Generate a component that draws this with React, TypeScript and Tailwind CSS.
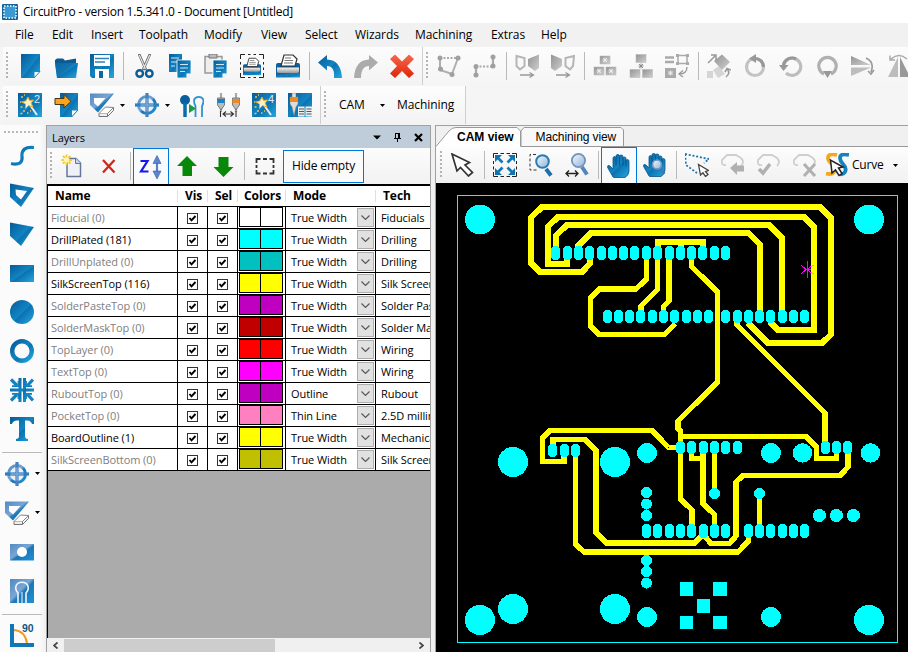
import React from "react";

type Kids = { children?: React.ReactNode };

const B = "url(#blue)";
const S = "url(#steel)";
const G = "url(#gray)";

function Defs() {
  return (
    <svg className="absolute h-0 w-0" aria-hidden="true">
      <defs>
        <linearGradient id="blue" x1="0" y1="0" x2="1" y2="1">
          <stop offset="0" stopColor="#075a96" />
          <stop offset="0.5" stopColor="#1284c2" />
          <stop offset="0.55" stopColor="#0c72b1" />
          <stop offset="1" stopColor="#22a9e0" />
        </linearGradient>
        <linearGradient id="steel" x1="0" y1="0" x2="1" y2="1">
          <stop offset="0" stopColor="#4f8ac2" />
          <stop offset="0.45" stopColor="#7ba6d4" />
          <stop offset="0.55" stopColor="#1b77b8" />
          <stop offset="1" stopColor="#1d93d2" />
        </linearGradient>
        <linearGradient id="gray" x1="0" y1="0" x2="1" y2="1">
          <stop offset="0" stopColor="#939393" />
          <stop offset="1" stopColor="#cfcfcf" />
        </linearGradient>
        <linearGradient id="silver" x1="0" y1="0" x2="0" y2="1">
          <stop offset="0" stopColor="#f6f6f6" />
          <stop offset="1" stopColor="#8c8c8c" />
        </linearGradient>
        <linearGradient id="lens" x1="0" y1="0" x2="1" y2="1">
          <stop offset="0" stopColor="#f2f8fd" />
          <stop offset="1" stopColor="#8fb4dd" />
        </linearGradient>
        <linearGradient id="red" x1="0" y1="0" x2="0" y2="1">
          <stop offset="0" stopColor="#f4694d" />
          <stop offset="1" stopColor="#e02408" />
        </linearGradient>
      </defs>
    </svg>
  );
}

/* A 36px toolbar slot that holds one 24px icon. */
function Slot({ children, on }: Kids & { on?: boolean }) {
  return (
    <div className={on ? "flex h-full w-9 shrink-0 items-center justify-center border border-b-0 border-[#0078d7] bg-[#f9fafc]" : "flex h-full w-9 shrink-0 items-center justify-center"}>
      <svg viewBox="0 0 24 24" className="h-6 w-6 shrink-0" fill="none">{children}</svg>
    </div>
  );
}

function VSlot({ children, drop }: Kids & { drop?: boolean }) {
  return (
    <div className={drop ? "flex h-[39px] shrink-0 items-center gap-1.5 pl-[5px]" : "flex h-[39px] shrink-0 items-center pl-2.5"}>
      <svg viewBox="0 0 24 24" className="h-6 w-6 shrink-0" fill="none">{children}</svg>
      {drop && <Caret />}
    </div>
  );
}

function Sep() {
  return (
    <div className="flex h-full w-1.5 shrink-0 items-center justify-center">
      <div className="h-7 w-px bg-[#b9b9b9]" />
    </div>
  );
}

function Grip() {
  return (
    <svg className="h-7 w-0.5 shrink-0" viewBox="0 0 2 28" shapeRendering="crispEdges">
      <path d="M1 0V28" stroke="#b4b4b4" strokeWidth="2" strokeDasharray="2 2" />
    </svg>
  );
}

function Caret() {
  return (
    <svg className="h-[3px] w-[5px] shrink-0" viewBox="0 0 5 3">
      <path d="M0 0H5L2.5 3Z" fill="#000" />
    </svg>
  );
}

/* ---------- shared icon drawings ---------- */

const Wand = ({ n }: { n: string }) => (
  <>
    <rect width="24" height="24" fill={B} />
    <path d="M12 12L19 22" stroke="#e9eef2" strokeWidth="2" />
    <path d="M10 4L11.500 7.500L15.500 7L13 10L15 14L10.500 12.500L7.500 15.500L7.500 11L4 9L8 7.800Z" fill="#fff3c4" stroke="#f4a81c" strokeWidth="1" />
    <path d="M3 4h2M2 9h1.500M2.500 14h2M5 18h2M9 20h1.500M2.500 20.500h2M6 2h1M12 18h1" stroke="#f6c04a" strokeWidth="1.500" />
    <text x="16" y="9.500" fontSize="11" fontFamily="Liberation Sans" fill="#dbe8f3">{n}</text>
  </>
);

const Eraser = () => (
  <>
    <path d="M0 0.500H24L8 19.500L0 12Z" fill={S} />
    <path d="M4 5H15.500L8 13.500L4 10Z" fill="#fff" />
    <path d="M9 20.500L15.500 14L23.500 14.500L17.500 20.500Z" fill="#fff" stroke="#777" strokeWidth="0.900" />
    <path d="M9 20.500V23.500H17.500V20.500M17.500 23.500L23.500 17.500V14.500" fill="#eee" stroke="#666" strokeWidth="0.900" />
  </>
);

const Target = () => (
  <>
    <circle cx="12" cy="12" r="8.500" stroke={S} strokeWidth="3" fill="#e8f0f8" />
    <path d="M12 0V24" stroke="#4682bd" strokeWidth="3.200" />
    <path d="M0 12.010H24" stroke="#2f7fc0" strokeWidth="3.200" />
    <path d="M12 5.500V18.500M5.500 12.010H18.500" stroke="#7fa9d6" strokeWidth="1.500" />
  </>
);

const Printer = () => (
  <>
    <path d="M0 11Q0 9 2 9H22Q24 9 24 11V23H0Z" fill="#0e5f9b" />
    <path d="M5 12L8 1H17L21 5L19 12Z" fill="#fff" stroke="#333" strokeWidth="1.200" />
    <path d="M9 4H15M8.500 6.500H17M8 9H17" stroke="#777" />
    <path d="M1 13.500H23V18.500Q12 21 1 18.500Z" fill="url(#silver)" />
    <path d="M0 19H24V23.500H0Z" fill={B} />
  </>
);

const Hand = () => (
  <path
    d="M6 23L2 16Q-0.500 12.500 1 11.500Q3 11 5 14L6 15V4.500Q6 2.500 7.500 2.500Q9 2.500 9 4.500V2Q9 0.500 10.700 0.500Q12.500 0.500 12.500 2V2.500Q12.500 1 14.200 1Q16 1 16 2.500V4.500Q16 3 17.600 3Q19 3 19 4.500V7Q19 5.500 20.500 5.500Q22 5.500 22 7.500V17Q22 21 18 23.500H7Z"
    fill={B}
    stroke="#0a568c"
    strokeWidth="0.800"
  />
);

const HandLines = () => <path d="M9 5V11.500M12.500 3V11.500M16 4V11.500M19 7V12.500" stroke="#064a7c" strokeWidth="0.800" />;

const Pointer = () => <path d="M1 1L6 18L9.500 14.500L17.500 23L21.500 19.500L14 12L18.500 9.500Z" fill="#fff" stroke="#333" strokeWidth="1.700" />;

const MiniPointer = () => <path d="M13.500 11.500L15.500 22L18 19.800L20.500 23.500L23 21.500L20.500 18.500L23.500 17.500Z" fill="#fff" stroke="#444" strokeWidth="1.300" />;

const Blk = ({ x, y }: { x: number; y: number }) => (
  <rect x={x} y={y} width="10" height="8" fill={G} stroke="#b5b5b5" strokeWidth="0.500" />
);

const Star = ({ x, y, c }: { x: number; y: number; c: string }) => (
  <path transform={`translate(${x} ${y})`} d="M-2.500 0H2.500M0 -2.500V2.500M-2 -2L2 2M-2 2L2 -2" stroke={c} strokeWidth="0.900" />
);

const Lasso = () => (
  <path d="M5 12Q0 13 1 7L6 2H15L20 5Q24 9 20 13" stroke="#cfcfcf" strokeWidth="1.800" />
);

/* ---------- main toolbars ---------- */

function RowOne() {
  return (
    <div className="flex h-[38px] w-full shrink-0 overflow-hidden pl-[3px]">
      <div className="flex h-full w-[420px] shrink-0 items-center border-r border-[#cfcfcf] bg-linear-to-b from-[#fcfcfc] to-[#f3f3f3] pl-[3px]">
        <Grip />
        <div className="w-1 shrink-0" />
        <Slot><path d="M3 0H22V17L16 24H3Z" fill={B} /><path d="M16 24V17.500H22Z" fill="#fff" stroke="#1389c5" /></Slot>
        <Slot><path d="M1 6L3 4.500H9L11 6.500L22 4.500V9H1Z" fill="#0b5b93" /><path d="M1 9H24L22 24H3Z" fill={B} /><path d="M1 9H20L3 24Z" fill="#136ea8" opacity="0.600" /></Slot>
        <Slot><path d="M0 0H24V24H2L0 22Z" fill={B} /><path d="M4 1H20V12H4Z" fill="#fff" /><path d="M5 4.500H19M5 8H15" stroke="#3183b5" strokeWidth="1.500" /><path d="M5 15H19V24H5Z" fill="#fff" /><path d="M9 17H13V24H9Z" fill="#0c69a5" /></Slot>
        <Sep />
        <Slot><path d="M7 0L14 16M18 0L11 16" stroke="#666" strokeWidth="2.600" /><path d="M7.300 1L13.500 15M17.700 1L11.500 15" stroke="#e4e4e4" strokeWidth="1.200" /><circle cx="7.700" cy="19.500" r="3.300" stroke="#0b5c97" strokeWidth="2.400" /><circle cx="17.300" cy="19.500" r="3.300" stroke="#0b5c97" strokeWidth="2.400" /></Slot>
        <Slot><path d="M1 0H14V18H1Z" fill={B} /><path d="M3 4H11M3 8H9M3 12H7" stroke="#cde6f5" strokeWidth="1.200" /><path d="M9 6H23V20L19 24H9Z" fill={B} stroke="#fff" strokeWidth="0.800" /><path d="M12 10.500H20M12 14H20M12 17.500H17" stroke="#cde6f5" strokeWidth="1.200" /><path d="M18.500 24V19.500H23Z" fill="#fff" /></Slot>
        <Slot><path d="M1 2.500H18V19H1Z" fill="#eee" stroke="#999" strokeWidth="1.500" /><path d="M5 0H13V4H5Z" fill="#bbb" stroke="#777" /><path d="M9 6H23V20L19 24H9Z" fill={B} stroke="#fff" strokeWidth="0.800" /><path d="M12 10.500H20M12 14H20M12 17.500H17" stroke="#cde6f5" strokeWidth="1.200" /><path d="M18.500 24V19.500H23Z" fill="#fff" /></Slot>
        <Slot><path d="M0.500 5V0.500H5M19 0.500H23.500V5M23.500 19V23.500H19M5 23.500H0.500V19M8 0.500H10.500M13.500 0.500H16M8 23.500H10.500M13.500 23.500H16M0.500 8V10.500M0.500 13.500V16M23.500 8V10.500M23.500 13.500V16" stroke="#222" /><g transform="translate(3 3.500) scale(0.75)"><Printer /></g></Slot>
        <Slot><Printer /></Slot>
        <Sep />
        <Slot><path d="M0 8.500L9 1V5.500Q23 6 24 24H16Q17 12 9 12V16.500Z" fill={B} /></Slot>
        <Slot><path d="M24 8.500L15 1V5.500Q1 6 0 24H7Q7 12 15 12V16.500Z" fill="#ababab" /></Slot>
        <Slot><path d="M0 5L5 0.500L12 7.500L19 0.500L24 5L17 12L24 19.500L19 24L12 17L5 24L0 19.500L7 12Z" fill="url(#red)" /></Slot>
      </div>
      <div className="flex h-full w-[520px] shrink-0 items-center bg-linear-to-b from-[#fcfcfc] to-[#f5f5f5] pl-[3px]">
        <Grip />
        <div className="w-[3px] shrink-0" />
        <Slot><path d="M3 4H20" stroke="#aaa" strokeWidth="2" strokeDasharray="2 1.500" /><path d="M3 4V16L15 20L21 4" stroke="#b0b0b0" strokeWidth="2" /><g fill="#a0a0a0"><circle cx="3" cy="4" r="2.500" /><circle cx="21" cy="4" r="2.500" /><circle cx="3.500" cy="15" r="2.500" /><circle cx="15" cy="20.500" r="2.500" /></g></Slot>
        <Slot><path d="M3 21V12.500M20 12V3" stroke="#aaa" strokeWidth="2.200" /><path d="M3 12.500H20" stroke="#aaa" strokeWidth="2" strokeDasharray="2 1.500" /><g fill="#a0a0a0"><circle cx="3" cy="21" r="2.500" /><circle cx="3" cy="12.500" r="2.500" /><circle cx="20" cy="12" r="2.500" /><circle cx="20" cy="3" r="2.500" /></g></Slot>
        <Sep />
        <Slot><path d="M1.500 2L9.500 4V12L5 15.500L1.500 12Z" stroke="#b5b5b5" strokeWidth="2" /><path d="M24 0.500L13 5V12L20 17L24 14Z" fill={G} /><path d="M5 21H18M14.500 18.500L18.500 21L14.500 23.500" stroke="#999" strokeWidth="1.300" /></Slot>
        <Slot><path d="M0 0.500L11 5V12L4 17L0 14Z" fill={G} /><path d="M23 2L14.500 4V12L19 15.500L22 12Z" stroke="#b5b5b5" strokeWidth="2" /><path d="M5 21H18M14.500 18.500L18.500 21L14.500 23.500" stroke="#999" strokeWidth="1.300" /></Slot>
        <Sep />
        <Slot><Blk x={7} y={2} /><Blk x={1} y={13} /><Blk x={13} y={13} /><Star x={12} y={6} c="#eee" /><Star x={6} y={17} c="#eee" /><Star x={18} y={17} c="#eee" /></Slot>
        <Slot><Blk x={7} y={0.5} /><Blk x={1} y={15.5} /><Blk x={13.5} y={15.5} /><Star x={12} y={12} c="#888" /></Slot>
        <Slot><path d="M0 3.500H9M0 8H9" stroke="#aaa" strokeWidth="2.600" /><rect x="13" y="1.500" width="9" height="8" stroke="#aaa" strokeWidth="1.500" /><g fill="#aaa"><path d="M11 0h3v3h-3zM21 0h3v3h-3zM11 8h3v3h-3zM21 8h3v3h-3z" /></g><path d="M0 14H11V24H0Z" fill="#aaa" /><Star x={5.5} y={19} c="#eee" /><path d="M22 13Q22 20 14 20M18 16.500L14 20L18 23" stroke="#999" strokeWidth="1.300" /></Slot>
        <Sep />
        <Slot><path d="M0 17H6V24H0Z M6 16L12 12L18 20L11 24Z" fill="#d5d5d5" /><path d="M7 7L15 0.500L23 8L15 16Z" fill={G} /><path d="M1 9L8 2M4 1H9V6" stroke="#999" strokeWidth="1.500" /><path d="M19 23Q24 19 20 15M18 18L20 14.500L24 16" stroke="#999" strokeWidth="1.600" /></Slot>
        <Slot><circle cx="12" cy="13" r="8.500" stroke="#c3c3c3" strokeWidth="3.200" /><path d="M12 4.500A8.500 8.500 0 0 1 20.500 13" stroke="#999" strokeWidth="3.200" /><path d="M13 0L6 4.500L13 9Z" fill="#999" /></Slot>
        <Slot><path d="M7 19A8.700 8.700 0 1 0 4.500 11" stroke="#bdbdbd" strokeWidth="3.200" /><path d="M4.500 11A8.700 8.700 0 0 1 17 5" stroke="#999" strokeWidth="3.200" /><path d="M0 11H9.500L4.500 17Z" fill="#999" /></Slot>
        <Slot><path d="M9 20A8.700 8.700 0 1 1 16 20" stroke="#b0b0b0" strokeWidth="3.200" /><path d="M8 17H17L12.500 24Z" fill="#999" /></Slot>
        <Slot><path d="M0 2L20 11H0Z" fill={G} /><path d="M0 22L20 13.500H0Z" fill="#bdbdbd" /><path d="M15 4Q24 8 20 18M17 17L20 20L23 16" stroke="#999" strokeWidth="1.600" /></Slot>
        <Slot><path d="M11 3V23H1Z" fill="#bdbdbd" /><path d="M13 3V23H23Z" fill="#999" /><path d="M4 5Q12 -2 20 5M3 1.500V6H8" stroke="#aaa" strokeWidth="1.500" /></Slot>
      </div>
    </div>
  );
}

function RowTwo() {
  return (
    <div className="flex h-[38px] w-full shrink-0 pl-[3px]">
      <div className="flex h-full w-[318px] shrink-0 items-center border-r border-[#cfcfcf] bg-linear-to-b from-[#fdfdfd] to-[#f3f3f3] pl-[3px]">
        <Grip />
        <div className="w-1 shrink-0" />
        <Slot><Wand n="2" /></Slot>
        <Slot><path d="M6 0H24V17L18 24H6Z" fill={B} /><path d="M17.500 24V17H24Z" fill="#fff" stroke="#1389c5" /><path d="M1 5.500H10V1.500L17 8.500L10 15V11.500H1Z" fill="#f9a51c" stroke="#4a3512" /></Slot>
        <Slot><Eraser /></Slot>
        <div className="w-[9px] shrink-0"><Caret /></div>
        <Slot><Target /></Slot>
        <div className="w-[9px] shrink-0"><Caret /></div>
        <Slot><circle cx="5" cy="7" r="5" fill="#0c5f9d" /><path d="M5 10V24" stroke="#0c6cab" strokeWidth="3.500" /><path d="M15.500 24V13Q14 11 14 7A5 4.500 0 0 1 23.500 7Q23.500 11 22 13V24" stroke="#3192d0" strokeWidth="1.800" /><path d="M9 11L16 15.500L9 20Z" fill="#1c9a3c" /></Slot>
        <Slot><path d="M5 0V19M20 0V19" stroke="#aaa" strokeWidth="2.200" /><path d="M1.500 5H8.500V12L5 17L1.500 12Z" fill="#bbb" stroke="#555" strokeWidth="0.700" /><path d="M1.500 6H8.500V10H1.500Z" fill="#1385c8" /><path d="M16.500 5H23.500V12L20 17L16.500 12Z" fill="#bbb" stroke="#555" strokeWidth="0.700" /><path d="M16.500 6H23.500V10H16.500Z" fill="#f08a1c" /><path d="M7 21H17M10 18.500L7 21L10 23.500M14.500 18.500L17.500 21L14.500 23.500M4.500 18V24M20 18V24" stroke="#333" strokeWidth="1.100" /></Slot>
        <Slot><Wand n="4" /></Slot>
        <Slot><rect width="24" height="24" fill={B} /><path d="M4 0H8V4H10V11L8 14L6 23L4 14L2 11V4H4Z" fill="#ddd" stroke="#777" strokeWidth="0.500" /><path d="M2 4H10V9H2Z" fill="#ee8a22" /><path d="M10 13.500H16.500V23.500H10ZM17.500 13.500H24V23.500H17.500Z" fill="#eee" /><path d="M11 16h5M11 18.500h5M11 21h5M18.500 16h5M18.500 18.500h5M18.500 21h5" stroke="#555" strokeWidth="1.200" /></Slot>
      </div>
      <div className="flex h-full w-[145px] shrink-0 items-center border-r border-[#cfcfcf] bg-linear-to-b from-[#fdfdfd] to-[#f3f3f3] pl-[3px]">
        <Grip />
        <span className="ml-[13px] w-[41px] shrink-0">CAM</span>
        <Caret />
        <span className="ml-3">Machining</span>
      </div>
    </div>
  );
}

function LeftBar() {
  return (
    <div className="flex h-[527px] w-[46px] shrink-0 flex-col overflow-hidden bg-linear-to-r from-[#fbfbfb] from-85% to-[#f0f0f0]">
      <div className="flex h-[11px] shrink-0 items-start pt-1.5 pl-1">
        <svg className="h-0.5 w-[35px]" viewBox="0 0 35 2" shapeRendering="crispEdges"><path d="M0 1H35" stroke="#b8b8b8" strokeWidth="2" strokeDasharray="2 2" /></svg>
      </div>
      <VSlot><path d="M1 19.500Q13 22 12 13Q11 2 24 3.500" stroke={B} strokeWidth="3.200" /></VSlot>
      <VSlot><path d="M0 0.500L24 5L11 24L0 14Z" fill={B} /><path d="M5.500 6.500L17 8L11 16.500L6 12Z" fill="#fff" /></VSlot>
      <VSlot><path d="M0 0.500L24 5L11 24L0 14Z" fill={B} /></VSlot>
      <VSlot><path d="M0 4H24V21H0Z" fill={B} /></VSlot>
      <VSlot><circle cx="12" cy="12" r="12" fill={B} /></VSlot>
      <VSlot><circle cx="12" cy="12" r="9.800" stroke={B} strokeWidth="4.400" /></VSlot>
      <VSlot><path d="M0 10.400H24V13.600H0ZM8.500 0H11.500V24H8.500ZM13 0H16V24H13Z" fill={B} /><path d="M1 1.500L7 7.500M23 1.500L17.500 7.500M1 22.500L7 16.500M23 22.500L17.500 16.500" stroke="#1282c0" strokeWidth="3.200" /><path d="M2 8.200H8.500V3M22 8.200H16V3M2 15.800H8.500V21M22 15.800H16V21" stroke="#1180be" strokeWidth="1.800" /></VSlot>
      <VSlot><path d="M0 0H24V7H22Q21 3.500 17 3.500H15V19Q15 22 18 22V24H6V22Q9 22 9 19V3.500H7Q3 3.500 2 7H0Z" fill={B} /></VSlot>
      <div className="mt-[4px] mb-px ml-0.5 h-px w-10 shrink-0 bg-[#b9b9b9]" />
      <VSlot drop><Target /></VSlot>
      <VSlot drop><Eraser /></VSlot>
      <VSlot><path d="M0 4H24V20.500H0Z" fill={S} /><circle cx="12" cy="12" r="5" fill="#fff" /></VSlot>
      <VSlot><rect width="24" height="24" fill={S} /><path d="M8 24V14Q5 11 6 7A6.500 6 0 0 1 18 7Q19 11 16 14V24" stroke="#f2f6fa" strokeWidth="1.600" /><path d="M12 24V13" stroke="#f2f6fa" strokeWidth="1" /></VSlot>
      <div className="mt-[4px] ml-0.5 h-px w-10 shrink-0 bg-[#b9b9b9]" />
      <VSlot><path d="M2 1V22H24" stroke="#0f78b6" strokeWidth="4" /><path d="M4 7Q15 8 17 20" stroke="#f29a1c" strokeWidth="2" /><text x="12" y="8.500" fontSize="10.500" fontWeight="700" fontFamily="Liberation Sans" fill="#14577f">90</text></VSlot>
    </div>
  );
}

/* ---------- layers panel ---------- */

type Layer = { name: string; live?: boolean; fill: string; mode: string; tech: string };

const layers: Layer[] = [
  { name: "Fiducial (0)", fill: "bg-white", mode: "True Width", tech: "Fiducials" },
  { name: "DrillPlated (181)", live: true, fill: "bg-[#00ffff]", mode: "True Width", tech: "Drilling" },
  { name: "DrillUnplated (0)", fill: "bg-[#00c0c0]", mode: "True Width", tech: "Drilling" },
  { name: "SilkScreenTop (116)", live: true, fill: "bg-[#ffff00]", mode: "True Width", tech: "Silk Screen" },
  { name: "SolderPasteTop (0)", fill: "bg-[#c000c0]", mode: "True Width", tech: "Solder Paste" },
  { name: "SolderMaskTop (0)", fill: "bg-[#c00000]", mode: "True Width", tech: "Solder Mask" },
  { name: "TopLayer (0)", fill: "bg-[#ff0000]", mode: "True Width", tech: "Wiring" },
  { name: "TextTop (0)", fill: "bg-[#ff00ff]", mode: "True Width", tech: "Wiring" },
  { name: "RuboutTop (0)", fill: "bg-[#c000c0]", mode: "Outline", tech: "Rubout" },
  { name: "PocketTop (0)", fill: "bg-[#ff80c0]", mode: "Thin Line", tech: "2.5D milling" },
  { name: "BoardOutline (1)", live: true, fill: "bg-[#ffff00]", mode: "True Width", tech: "Mechanical" },
  { name: "SilkScreenBottom (0)", fill: "bg-[#c0c000]", mode: "True Width", tech: "Silk Screen" },
];

function Check() {
  return (
    <svg className="mt-px h-[11px] w-[11px]" viewBox="0 0 11 11">
      <rect x="0.500" y="0.500" width="10" height="10" fill="#fff" stroke="#333" />
      <path d="M2.500 5L4.500 7.300L8.500 3" stroke="#000" strokeWidth="1.900" fill="none" />
    </svg>
  );
}

function LayerRow({ l }: { l: Layer }) {
  return (
    <div className="flex h-[22px] w-[383px] shrink-0 overflow-hidden border-b border-l border-black bg-white text-[11px]">
      <div className={l.live ? "flex w-[129px] shrink-0 items-center pl-[3px] whitespace-nowrap text-black" : "flex w-[129px] shrink-0 items-center pl-[3px] whitespace-nowrap text-[#808080]"}>{l.name}</div>
      <div className="flex w-[30px] shrink-0 items-center justify-center border-l border-black"><Check /></div>
      <div className="flex w-[30px] shrink-0 items-center justify-center border-l border-black"><Check /></div>
      <div className="flex w-12 shrink-0 border-l border-black pl-px">
        <div className="flex h-5 w-[44px] border border-black">
          <div className={`w-[21px] border-r border-black ${l.fill}`} />
          <div className={`flex-1 ${l.fill}`} />
        </div>
      </div>
      <div className="flex w-[90px] shrink-0 items-center border-l border-black pl-[5px] whitespace-nowrap">
        <span className="w-[66px] shrink-0">{l.mode}</span>
        <div className="flex h-[19px] w-[17px] shrink-0 items-center justify-center border border-[#adadad] bg-[#e1e1e1]">
          <svg className="h-[5px] w-[9px]" viewBox="0 0 9 5"><path d="M0.500 0.500L4.500 4.500L8.500 0.500" fill="none" stroke="#555" strokeWidth="1.100" /></svg>
        </div>
      </div>
      <div className="flex flex-1 items-center overflow-hidden border-l border-black pl-[5px] whitespace-nowrap">{l.tech}</div>
    </div>
  );
}

function LayersPanel() {
  return (
    <div className="flex h-[527px] w-[385px] shrink-0 flex-col overflow-hidden border-t border-r border-l border-[#a0a0a0]">
      <div className="flex h-[22px] shrink-0 items-center bg-[#bfcddb] pr-[7px] pl-[5px] text-[11px]">
        <span className="flex-1">Layers</span>
        <svg className="h-[5px] w-2" viewBox="0 0 8 5"><path d="M0 0.500H8L4 4.500Z" fill="#000" /></svg>
        <svg className="ml-3 h-[11px] w-[9px]" viewBox="0 0 9 11" shapeRendering="crispEdges"><path d="M2.500 6V1.500H6.500V6M5.500 1V6M1 6.500H8M4.500 7V10" stroke="#000" fill="none" /></svg>
        <svg className="ml-3 h-[9px] w-[9px]" viewBox="0 0 9 9"><path d="M1 1L8 8M8 1L1 8" stroke="#000" strokeWidth="2.200" /></svg>
      </div>
      <div className="flex h-9 shrink-0 items-center bg-linear-to-b from-[#fcfcfc] to-[#f2f2f2] pl-[3px]">
        <Grip />
        <div className="w-[3px] shrink-0" />
        <Slot><path d="M6 4.500H15L19.500 9V22.500H6Z" fill="#eef2f8" stroke="#66779a" strokeWidth="1.500" /><path d="M14.500 4V9.500H20" fill="#c7d3e4" stroke="#66779a" /><path d="M5.500 0.500V11.500M0.500 6H11M2 2L9.500 9.500M9.500 2L2 9.500" stroke="#f2c63c" strokeWidth="1.800" /><circle cx="5.500" cy="6" r="2.800" fill="#fff6a8" /></Slot>
        <Slot><path d="M6 6L17.500 18.500M17.500 6L6 18.500" stroke="#d02718" strokeWidth="2.300" /></Slot>
        <Sep />
        <Slot on><path d="M1.500 6H8.500L2 16.500H9.500" stroke="#1616f0" strokeWidth="2.200" /><path d="M18 4V20" stroke="#5c80c8" strokeWidth="2.200" /><path d="M14 8.500L18 0.500L22 8.500ZM14 16L18 24L22 16Z" fill="#5a86d0" stroke="#3a5da6" strokeWidth="0.600" /></Slot>
        <Slot><path d="M12 2L22 12H17V22H7.500V12H2Z" fill="#088808" /></Slot>
        <Slot><path d="M12.500 23L22.500 13H17.500V3H7.500V13H2.500Z" fill="#088808" /></Slot>
        <Sep />
        <Slot><path d="M3.500 9V5H7.500M10 5H14M16.500 5H20.500V9M20.500 11V14M20.500 16V19.500H16.500M14 19.500H10M7.500 19.500H3.500V16M3.500 14V11" stroke="#333" strokeWidth="1.800" /></Slot>
        <div className="flex h-[33px] w-[81px] items-center justify-center border border-[#0078d7] bg-[#fafafa] text-[12px] tracking-[-0.15px]">Hide empty</div>
      </div>
      <div className="flex h-[23px] w-[383px] shrink-0 items-center border-t-2 border-b border-l border-black bg-white font-bold">
        <span className="w-[129px] pl-[7px]">Name</span>
        <span className="w-[30px] border-l border-[#e0e0e0] pl-[7px]">Vis</span>
        <span className="w-[30px] border-l border-[#e0e0e0] pl-[7px]">Sel</span>
        <span className="w-12 border-l border-[#e0e0e0] pl-[6px]">Colors</span>
        <span className="w-[90px] border-l border-[#e0e0e0] pl-[7px]">Mode</span>
        <span className="flex-1 border-l border-[#e0e0e0] pl-[7px]">Tech</span>
      </div>
      {layers.map((l) => <LayerRow key={l.name} l={l} />)}
      <div className="flex-1 border-l border-black bg-[#ababab]" />
      <div className="flex h-[14px] shrink-0 items-center bg-[#f0f0f0]">
        <svg className="ml-1.5 h-[7px] w-[5px]" viewBox="0 0 5 7"><path d="M4.500 0.500L1 3.500L4.500 6.500" fill="none" stroke="#444" strokeWidth="1.700" /></svg>
        <div className="ml-1.5 h-full w-[211px] border-t border-[#f0f0f0] bg-[#cdcdcd]" />
        <div className="flex-1" />
        <svg className="mr-1.5 h-[7px] w-[5px]" viewBox="0 0 5 7"><path d="M0.500 0.500L4 3.500L0.500 6.500" fill="none" stroke="#444" strokeWidth="1.700" /></svg>
      </div>
    </div>
  );
}

/* ---------- board canvas ---------- */

const traces = [
  "590,256 590,263.5 582,272 540,272 531,263 531,217.5 542,207 820,207 830.5,217.5 830.5,335 822,343 768,343 748,323",
  "567,256 567,264 548,264 548,226.5 558,217 804,217 813.5,226.5 813.5,330 778,330 770,322",
  "556,253 556,235.5 567,225 769,225 782,238 782,316",
  "578,250 578,246 591,233 748.5,233 759.5,244 759.5,316",
  "657.5,253 657.5,242 703,242 703,250",
  "680.5,242 680.5,250",
];

const thinTraces = [
  "646.5,255 646.5,279 636,289 599.5,289 590.5,298 590.5,326 599,334.5 664.5,334.5 675,324",
  "657.5,253 657.5,289.5 641,306 641,316",
  "669,255 669,301 663.5,306.5 663.5,316",
  "691.5,255 691.5,266.5 717.5,292 717.5,382 678,421 678,429 680.5,431 680.5,499 692,510 692,531",
  "680.5,436.5 806,436.5 816.5,447 816.5,458.5 836.5,458.5 836.5,447",
  "737,320 737,325 825,413 825,447",
  "680,447.5 668.5,447.5 652,430.5 550,430.5 542.5,438 542.5,461.5 564,461.5 564,450",
  "553,450 553,439.5 585,439.5 596,450.5 596,532.5 606.5,543 695,543 703,534 711,543.5 729.5,543.5 736,536 736,482 743,475.5 840,475.5 848,467 848,447",
  "575.5,450 575.5,544 584,552 738,552 748.5,541 748.5,531",
  "691.5,447 691.5,458.5 703,458.5",
  "703,447 703,503.5 714.5,514.5 714.5,531",
  "714.5,447 714.5,493",
  "759.5,493 759.5,531",
];

const padRows = [
  { y: 246, h: 14, xs: [555.5, 567.5, 578.5, 589.5, 601.5, 612.5, 623.5, 634.5, 646.5, 657.5, 669.5, 680.5, 691.5, 702.5, 714.5, 725.5] },
  { y: 310, h: 13, xs: [607.5, 618.5, 629.5, 640.5, 652.5, 663.5, 674.5, 686.5, 697.5, 708.5, 725.5, 737.5, 748.5, 759.5, 770.5, 782.5, 793.5, 804.5] },
  { y: 444, h: 13, xs: [552.5, 564.5, 575.5] },
  { y: 441, h: 13, xs: [680.5, 691.5, 703.5, 714.5, 725.5, 737.5, 825.5, 836.5, 847.5] },
  { y: 524, h: 14, xs: [646.5, 657.5, 669.5, 680.5, 691.5, 703.5, 714.5, 725.5, 748.5, 759.5, 770.5, 782.5, 793.5, 804.5] },
];

const holes: [number, number, number][] = [
  [480, 219.5, 15], [869, 219.5, 15], [513, 462, 15], [615, 462, 15],
  [480, 620, 15], [513, 609, 15], [615, 609, 15], [869, 620, 15],
  [647, 453, 10], [771, 453, 10], [802.5, 453, 9.7], [870.5, 453, 9.7], [647, 617, 10], [771, 617, 10],
  [646.5, 492.5, 5.5], [646.5, 504, 5.5], [646.5, 515.5, 5.5],
  [646.5, 560.5, 5.5], [646.5, 571.5, 5.5], [646.5, 583, 5.5],
  [714.5, 493.5, 5.5], [759.5, 493.5, 5.5],
  [819.5, 515.5, 6.5], [836.5, 515.5, 6.5], [853.5, 515.5, 6.5],
];

/* Drill pad: a slot 9px wide with stepped corners. */
function Pad({ x, y, h }: { x: number; y: number; h: number }) {
  return <path d={`M${x - 2.5} ${y}h5v1h1v1h1v${h - 4}h-1v1h-1v1h-5v-1h-1v-1h-1v-${h - 4}h1v-1h1z`} />;
}

function Board() {
  return (
    <svg className="block h-[469px] w-[472px] shrink-0 bg-black" viewBox="436 183 472 469" shapeRendering="crispEdges">
      <rect x="457.500" y="195.500" width="440" height="447" fill="none" stroke="#00ffff" />
      <g fill="none" stroke="#ffff00" strokeLinejoin="miter">
        {traces.map((p) => <polyline key={p} points={p} strokeWidth="6" />)}
        {thinTraces.map((p) => <polyline key={p} points={p} strokeWidth="5.400" />)}
      </g>
      <g fill="#00ffff">
        {padRows.map((r) => r.xs.map((x) => <Pad key={`${r.y}-${x}`} x={x} y={r.y} h={r.h} />))}
        {holes.map(([x, y, r]) => <circle key={`${x}-${y}`} cx={x} cy={y} r={r} />)}
        <path d="M680 582h13v14h-13zM713 582h14v14h-14zM697 599h13v14h-13zM680 616h13v13h-13zM713 616h14v13h-14z" />
      </g>
      <path d="M807.500 261V278M805 269.500H811M801 265.500L811 272.500M801 273.500L811 266.500" stroke="#ff00ff" fill="none" />
      <path d="M811 266.500L814 265M811 272.500L814 274" stroke="#00ffff" fill="none" />
    </svg>
  );
}

function CamPanel() {
  return (
    <div className="flex h-[527px] w-[473px] shrink-0 flex-col overflow-hidden border-t border-l border-[#a0a0a0]">
      <div className="relative flex h-5 shrink-0 bg-[#f0f0f0] font-[family-name:'Liberation_Sans',sans-serif] tracking-normal">
        <svg className="absolute top-0 left-0 h-[21px] w-[472px]" viewBox="436 126 472 21">
          <path d="M521 146.500V131L524 127.500H621L623.500 130V146.500" fill="#f8f8f8" stroke="#999" />
          <path d="M436 146.500L449 131Q452 127.500 456 127.500H517L520.500 131V146.500" fill="#fff" stroke="#999" />
          <path d="M521 146.500H908" stroke="#999" />
        </svg>
        <span className="relative mt-[3px] ml-[21px] w-[78.500px] text-[12px] leading-4 font-bold whitespace-nowrap">CAM view</span>
        <span className="relative mt-[3px] text-[12px] leading-4 tracking-[-0.1px] whitespace-nowrap">Machining view</span>
      </div>
      <div className="flex h-[37px] shrink-0 items-center overflow-hidden bg-linear-to-b from-[#fdfdfd] to-[#f1f1f1] pt-px pl-[4px]">
        <Grip />
        <div className="w-[3px] shrink-0" />
        <Slot><Pointer /></Slot>
        <Sep />
        <Slot><path d="M0.500 5V0.500H5M19 0.500H23.500V5M23.500 19V23.500H19M5 23.500H0.500V19M7.500 0.500H11M13.500 0.500H17M7.500 23.500H11M13.500 23.500H17M0.500 8V11M0.500 13.500V16.500M23.500 8V11M23.500 13.500V16.500" stroke="#222" /><path d="M4 4L9.500 9.500M20 4L14.500 9.500M4 20L9.500 14.500M20 20L14.500 14.500" stroke="#1279b8" strokeWidth="2.800" /><path d="M2 2H9L2 9ZM22 2V9L15 2ZM2 22V15L9 22ZM22 22H15L22 15Z" fill="#1172b2" /></Slot>
        <Slot><path d="M7 1.500H1V17H8" stroke="#333" strokeDasharray="3 2" /><path d="M17 16L22 22.500" stroke="#226da9" strokeWidth="4" /><circle cx="13.500" cy="8.500" r="6.300" fill="url(#lens)" stroke="#2a7ab4" strokeWidth="2" /></Slot>
        <Slot><path d="M17 14L22 21.500" stroke="#5385bd" strokeWidth="4" /><circle cx="13.500" cy="7.500" r="6.600" fill="url(#lens)" stroke="#7592b8" strokeWidth="1.800" /><path d="M1 20.500H13M4 17.500L1 20.500L4 23.500M10 17.500L13 20.500L10 23.500" stroke="#222" strokeWidth="1.300" /></Slot>
        <Sep />
        <Slot on><Hand /><HandLines /></Slot>
        <Slot><Hand /><HandLines /><path d="M17 15L21 21" stroke="#3f78b4" strokeWidth="3" /><circle cx="14" cy="11.500" r="4.500" fill="url(#lens)" stroke="#6e96c0" strokeWidth="1.600" /></Slot>
        <Sep />
        <Slot><path d="M0 1L24 6L19 10M0 1L1 12L12 20" stroke="#1874ae" strokeWidth="1.800" strokeDasharray="2 1.800" /><MiniPointer /></Slot>
        <Slot><Lasso /><path d="M9 15L16 9V12.500H23V18.500H16V22Z" fill="#b0b0b0" /></Slot>
        <Slot><Lasso /><path d="M2 16L6 20L13 11" stroke="#b0b0b0" strokeWidth="3.500" /></Slot>
        <Slot><Lasso /><path d="M11 11L22 23M22 11L11 23" stroke="#b0b0b0" strokeWidth="3" /></Slot>
        <div className="flex w-7 shrink-0 items-center pl-0.5">
          <svg viewBox="0 0 24 24" className="h-6 w-6" fill="none">
            <path d="M12 2Q3 0 3 5Q3 8 7 11Q11 15 9 19Q7 22 1 20.500" stroke="#f5a81c" strokeWidth="3.800" />
            <path d="M24 2Q15 0 15 5Q15 8 18 11Q22 15 20 19Q18 22 15 21" stroke="#1683be" strokeWidth="3.800" />
            <path d="M5.500 7L7 20L10.500 17L14 22.500L17 20.500L13.500 15L18 14Z" fill="#fff" stroke="#222" strokeWidth="1.500" />
          </svg>
        </div>
        <span className="ml-px w-[41px] shrink-0 tracking-[-0.2px]">Curve</span>
        <Caret />
      </div>
      <Board />
    </div>
  );
}

const menu: [string, string][] = [
  ["File", "w-[37px]"], ["Edit", "w-[39px]"], ["Insert", "w-12"], ["Toolpath", "w-[65px]"], ["Modify", "w-[57px]"],
  ["View", "w-11"], ["Select", "w-[50px]"], ["Wizards", "w-[60px]"], ["Machining", "w-[76px]"], ["Extras", "w-[50px]"], ["Help", "w-10"],
];

export default function App() {
  return (
    <div className="flex h-[652px] w-[908px] flex-col overflow-hidden bg-[#f5f5f5] font-[family-name:'Open_Sans','Noto_Sans',sans-serif] text-[12px] leading-none tracking-[-0.08px] text-black">
      <Defs />
      <div className="flex h-[23px] shrink-0 items-center bg-white pl-0.5">
        <svg className="h-4 w-4" viewBox="0 0 16 16"><rect width="16" height="16" rx="1" fill="#12659f" /><rect x="2" y="2" width="12" height="12" fill="#3b9ad2" stroke="#fff" strokeWidth="1.500" strokeDasharray="1.500 1.500" /></svg>
        <span className="ml-[5px] tracking-[-0.28px] whitespace-nowrap">CircuitPro - version 1.5.341.0 - Document [Untitled]</span>
      </div>
      <div className="flex h-6 shrink-0 items-center bg-[#f1f1f1] pl-[15px]">
        {menu.map(([t, w]) => <span key={t} className={`shrink-0 ${w}`}>{t}</span>)}
      </div>
      <RowOne />
      <div className="h-px shrink-0" />
      <RowTwo />
      <div className="h-px shrink-0" />
      <div className="flex h-[527px] shrink-0">
        <LeftBar />
        <LayersPanel />
        <div className="w-1 shrink-0 bg-[#f0f0f0]" />
        <CamPanel />
      </div>
    </div>
  );
}
